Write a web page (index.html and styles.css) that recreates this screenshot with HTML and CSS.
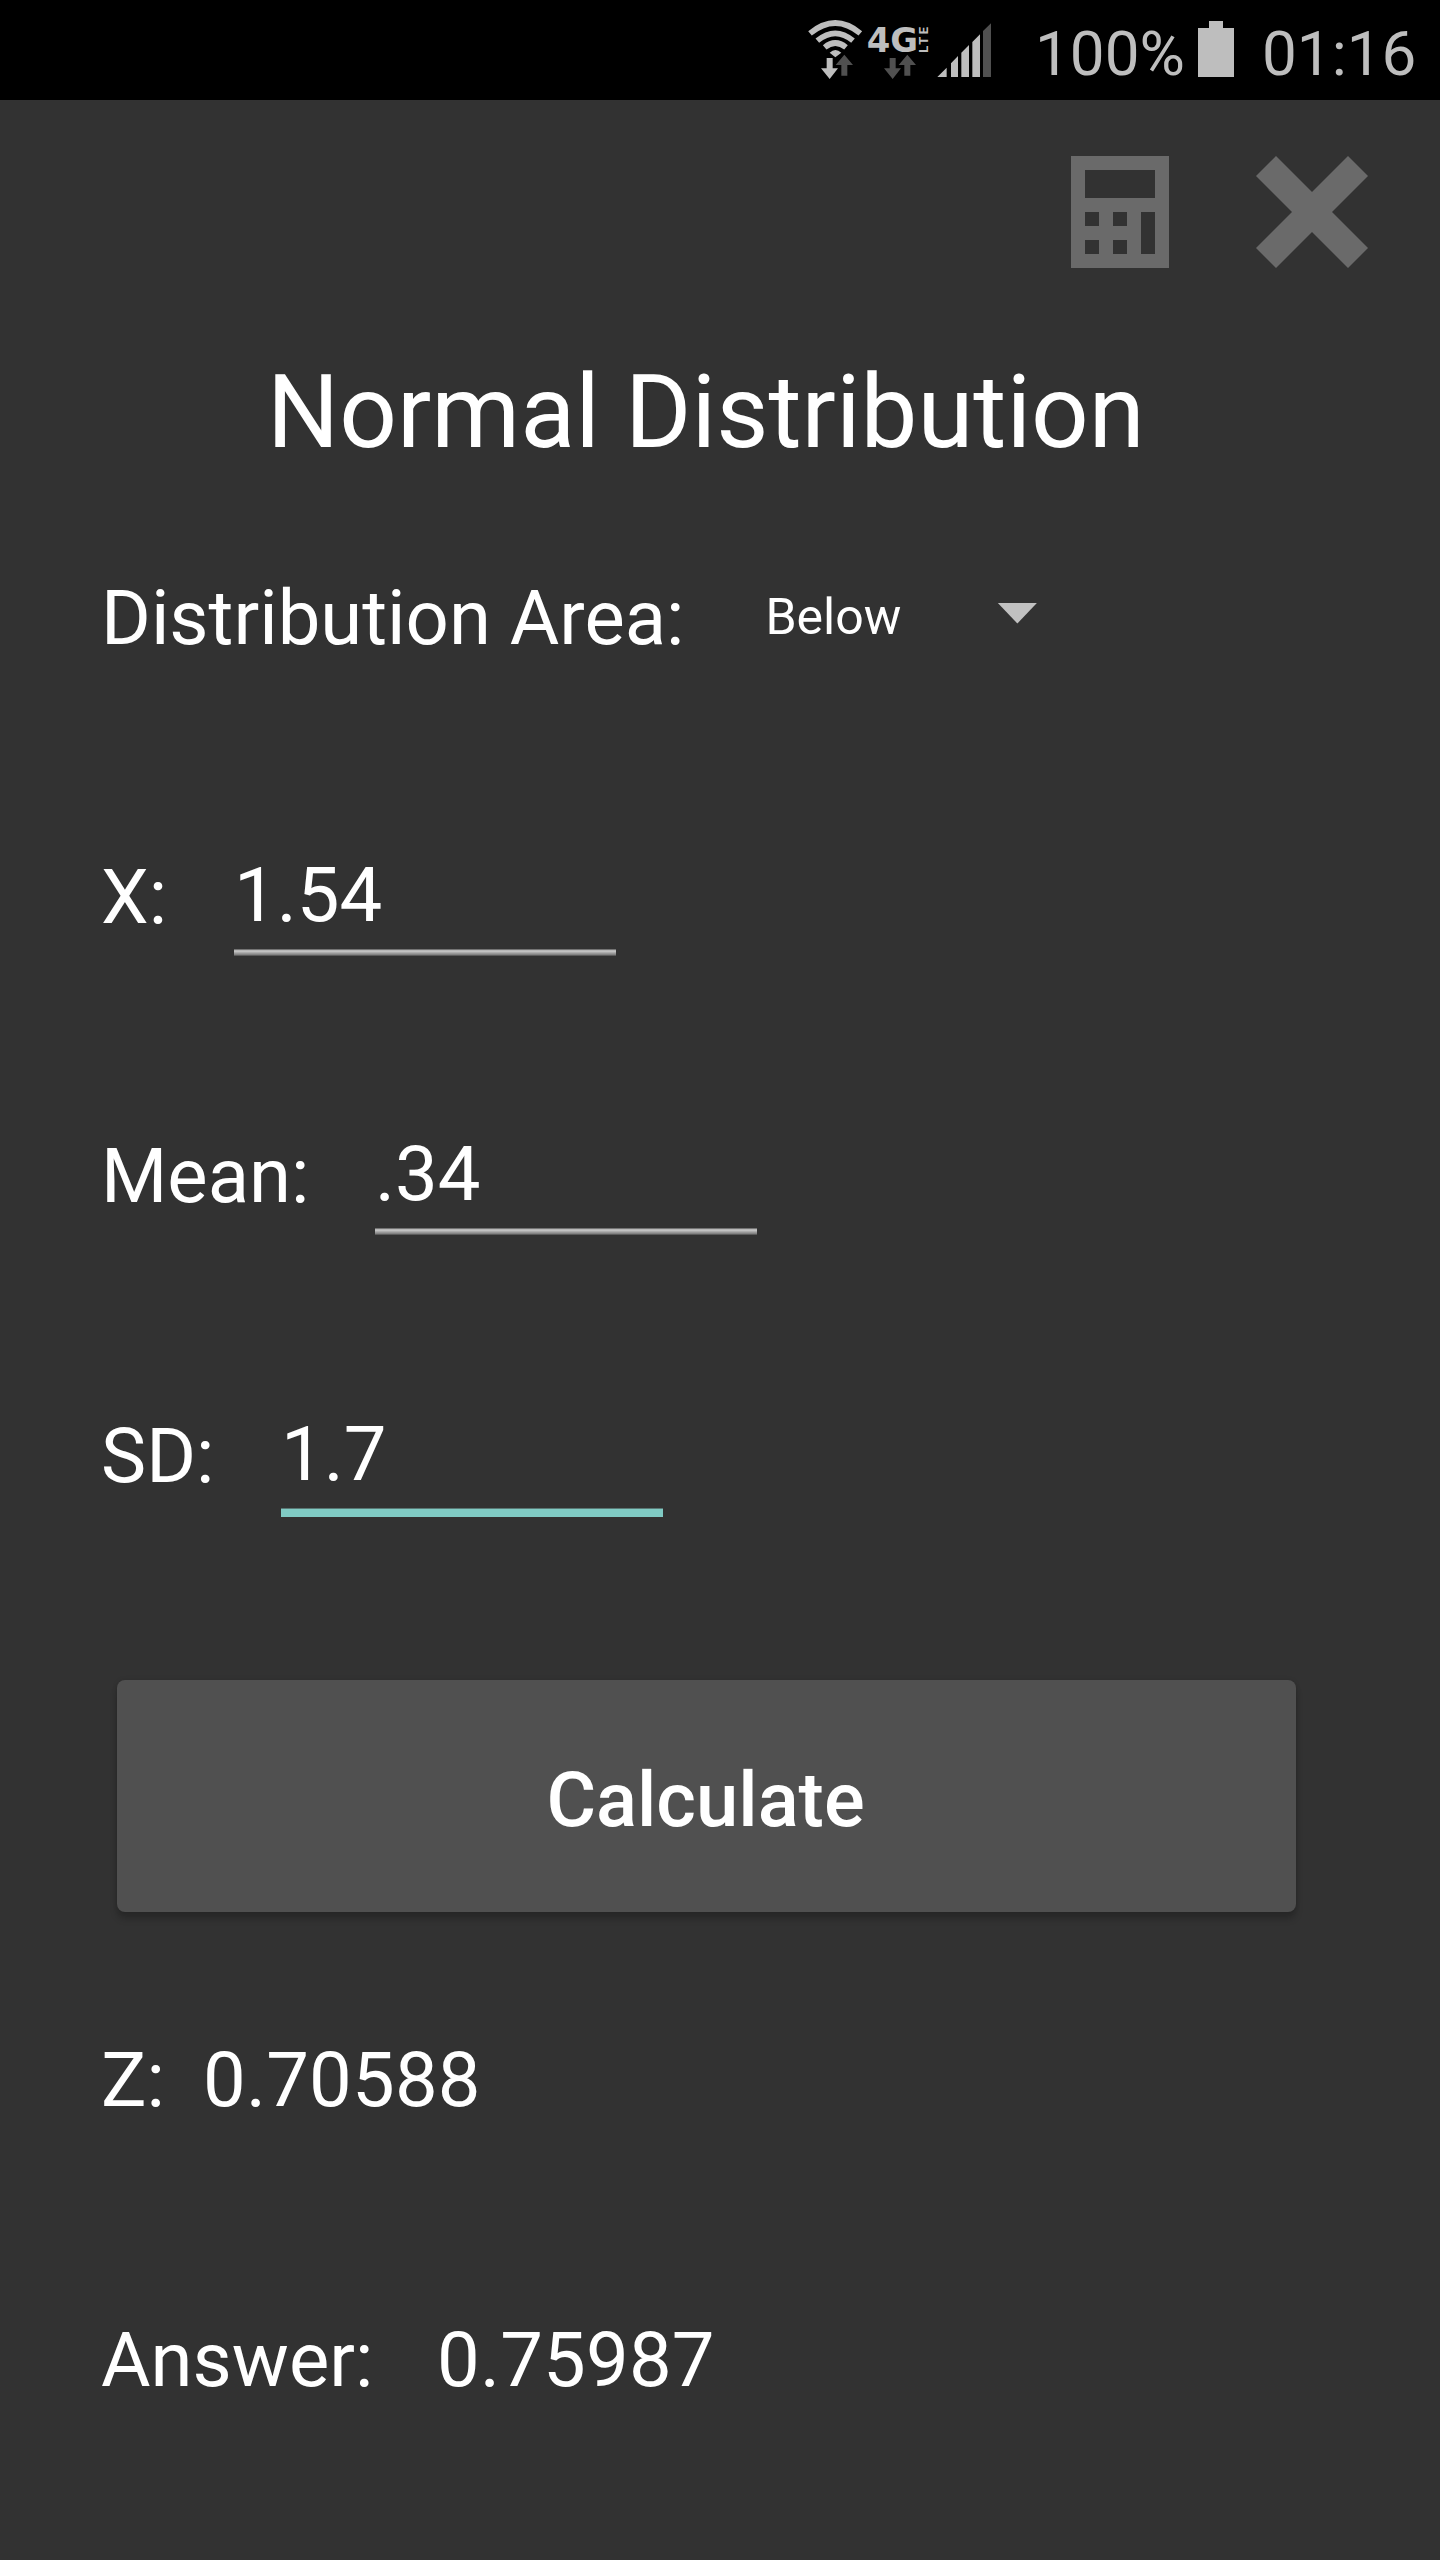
FILE: index.html
```html
<!DOCTYPE html>
<html lang="en">
<head>
<meta charset="utf-8">
<title>Normal Distribution</title>
<link rel="stylesheet" href="styles.css">
</head>
<body>
<header class="status">
  <svg class="signals" viewBox="0 0 660 300" aria-hidden="true">
    <g fill="none" stroke="#bebebe" stroke-width="17">
      <path d="M60 100Q136 38 211 100"/>
      <path d="M82 122Q136 78 189 122"/>
      <path d="M104 142Q136 116 168 142"/>
    </g>
    <path fill="#bebebe" d="M119 158Q136 142 154 158L136 172zM110 174h18v31h16l-25 32-26-32h17z"/>
    <path fill="#505050" d="M163 164l26 31h-17v32h-18v-32h-17zM299 174h18v31h16l-25 32-26-32h17zM352 164l26 31h-17v32h-18v-32h-17zM579 93l24-23v161h-24z"/>
    <text class="net" x="230" y="157" textLength="154" lengthAdjust="spacingAndGlyphs">4G</text>
    <text class="lte" transform="translate(413 158) rotate(-90)" textLength="77" lengthAdjust="spacing">LTE</text>
    <path fill="#bebebe" d="M442 231l28-28v28zM483 190l21-22v63h-21zM514 158l23-23v96h-23zM547 126l23-23v128h-23z"/>
  </svg>
  <span class="percent">100%</span>
  <svg class="battery" viewBox="0 0 36 56" aria-hidden="true"><path fill="#bebebe" d="M11 0h14v7h11v49H0V7h11z"/></svg>
  <span class="clock">01:16</span>
</header>
<main class="screen">
  <nav class="toolbar">
    <svg class="calc-icon" viewBox="0 0 98 112" aria-hidden="true"><path fill="#6a6a6a" fill-rule="evenodd" d="M0 0h98v112H0zM14 14v28h70V14zM14 56v14h14V56zM42 56v14h14V56zM70 56v42h14V56zM14 84v14h14V84zM42 84v14h14V84z"/></svg>
    <svg class="close-icon" viewBox="0 0 112 112" aria-hidden="true"><path fill="#6a6a6a" d="M20 0L56 36 92 0l20 20-36 36 36 36-20 20-36-36-36 36L0 92l36-36L0 20z"/></svg>
  </nav>
  <h1 class="title">Normal Distribution</h1>
  <section class="form">
    <div class="row"><span>Distribution Area:</span><span class="spinner">Below<i class="caret"></i></span></div>
    <div class="row"><span class="label-x">X:</span><span class="field">1.54</span></div>
    <div class="row"><span class="label-mean">Mean:</span><span class="field">.34</span></div>
    <div class="row"><span class="label-sd">SD:</span><span class="field focused">1.7</span></div>
  </section>
  <button class="calculate" type="button">Calculate</button>
  <section class="results">
    <div class="row"><span class="label-z">Z:</span><span>0.70588</span></div>
    <div class="row"><span class="label-answer">Answer:</span><span>0.75987</span></div>
  </section>
</main>
</body>
</html>
```
FILE: styles.css
```css
* { box-sizing: border-box; }
body {
  margin: 0;
  height: 2560px;
  background: #323232;
  color: #fff;
  font-family: Roboto, sans-serif;
  overflow: hidden;
}
.status {
  display: flex;
  height: 100px;
  padding-left: 790px;
  background: #000;
  color: #bebebe;
  font-size: 62px;
  line-height: 107px;
  white-space: nowrap;
}
.signals { width: 220px; height: 100px; flex: none; }
.net { font: 700 103px "DejaVu Sans", sans-serif; fill: #bebebe; }
.lte { font: 700 39px Roboto, sans-serif; fill: #bebebe; }
.percent { width: 163px; padding-left: 25px; flex: none; }
.battery { width: 36px; height: 56px; margin: 21px 0 0 25px; flex: none; }
.clock { padding-left: 28px; }
.toolbar {
  display: flex;
  justify-content: flex-end;
  height: 248px;
  padding: 56px 72px 0 0;
  gap: 87px;
}
.calc-icon { width: 98px; height: 112px; }
.close-icon { width: 112px; height: 112px; }
.title {
  margin: 0;
  padding-left: 267px;
  font-size: 101.3px;
  font-weight: 400;
  line-height: 130px;
  white-space: nowrap;
}
.form { display: grid; grid-template-rows: 279px 280px 278px 282px; }
.results { display: grid; grid-template-rows: 280px 280px; }
.row {
  display: flex;
  align-items: center;
  padding-left: 101px;
  font-size: 76px;
  white-space: nowrap;
}
.label-x { width: 133px; }
.label-mean { width: 274px; }
.label-sd { width: 180px; }
.label-z { width: 102px; }
.label-answer { width: 336px; }
.results .row span + span { letter-spacing: 0.2px; }
.field {
  width: 382px;
  height: 124px;
  line-height: 120px;
  background: linear-gradient(#747474 1px, #b8b8b8 1px 2px, #c2c2c2 2px 3px, #adadad 3px 4px, #989898 4px 5px, #848484 5px 6px, #5c5c5c 6px) 0 114px / 100% 7px no-repeat;
}
.focused {
  background: linear-gradient(#5a7875 1px, #80cbc4 1px) 0 114px / 100% 9px no-repeat;
}
.spinner {
  display: flex;
  align-items: center;
  margin-left: 81px;
  padding-bottom: 1px;
  font-size: 50px;
}
.caret {
  width: 40px;
  height: 21px;
  margin-left: 96px;
  margin-top: -8px;
  background: #c1c1c1;
  clip-path: polygon(0 0, 100% 0, 50% 100%);
}
.calculate {
  display: block;
  width: 1179px;
  height: 232px;
  margin: 83px 0 28px 117px;
  padding: 8px 2px 0 0;
  border: 0;
  border-radius: 8px;
  background: #505050;
  box-shadow: 0 7px 7px rgba(0, 0, 0, .2), 0 0 5px rgba(0, 0, 0, .12);
  color: #fff;
  font: 500 76px Roboto, sans-serif;
}
```
